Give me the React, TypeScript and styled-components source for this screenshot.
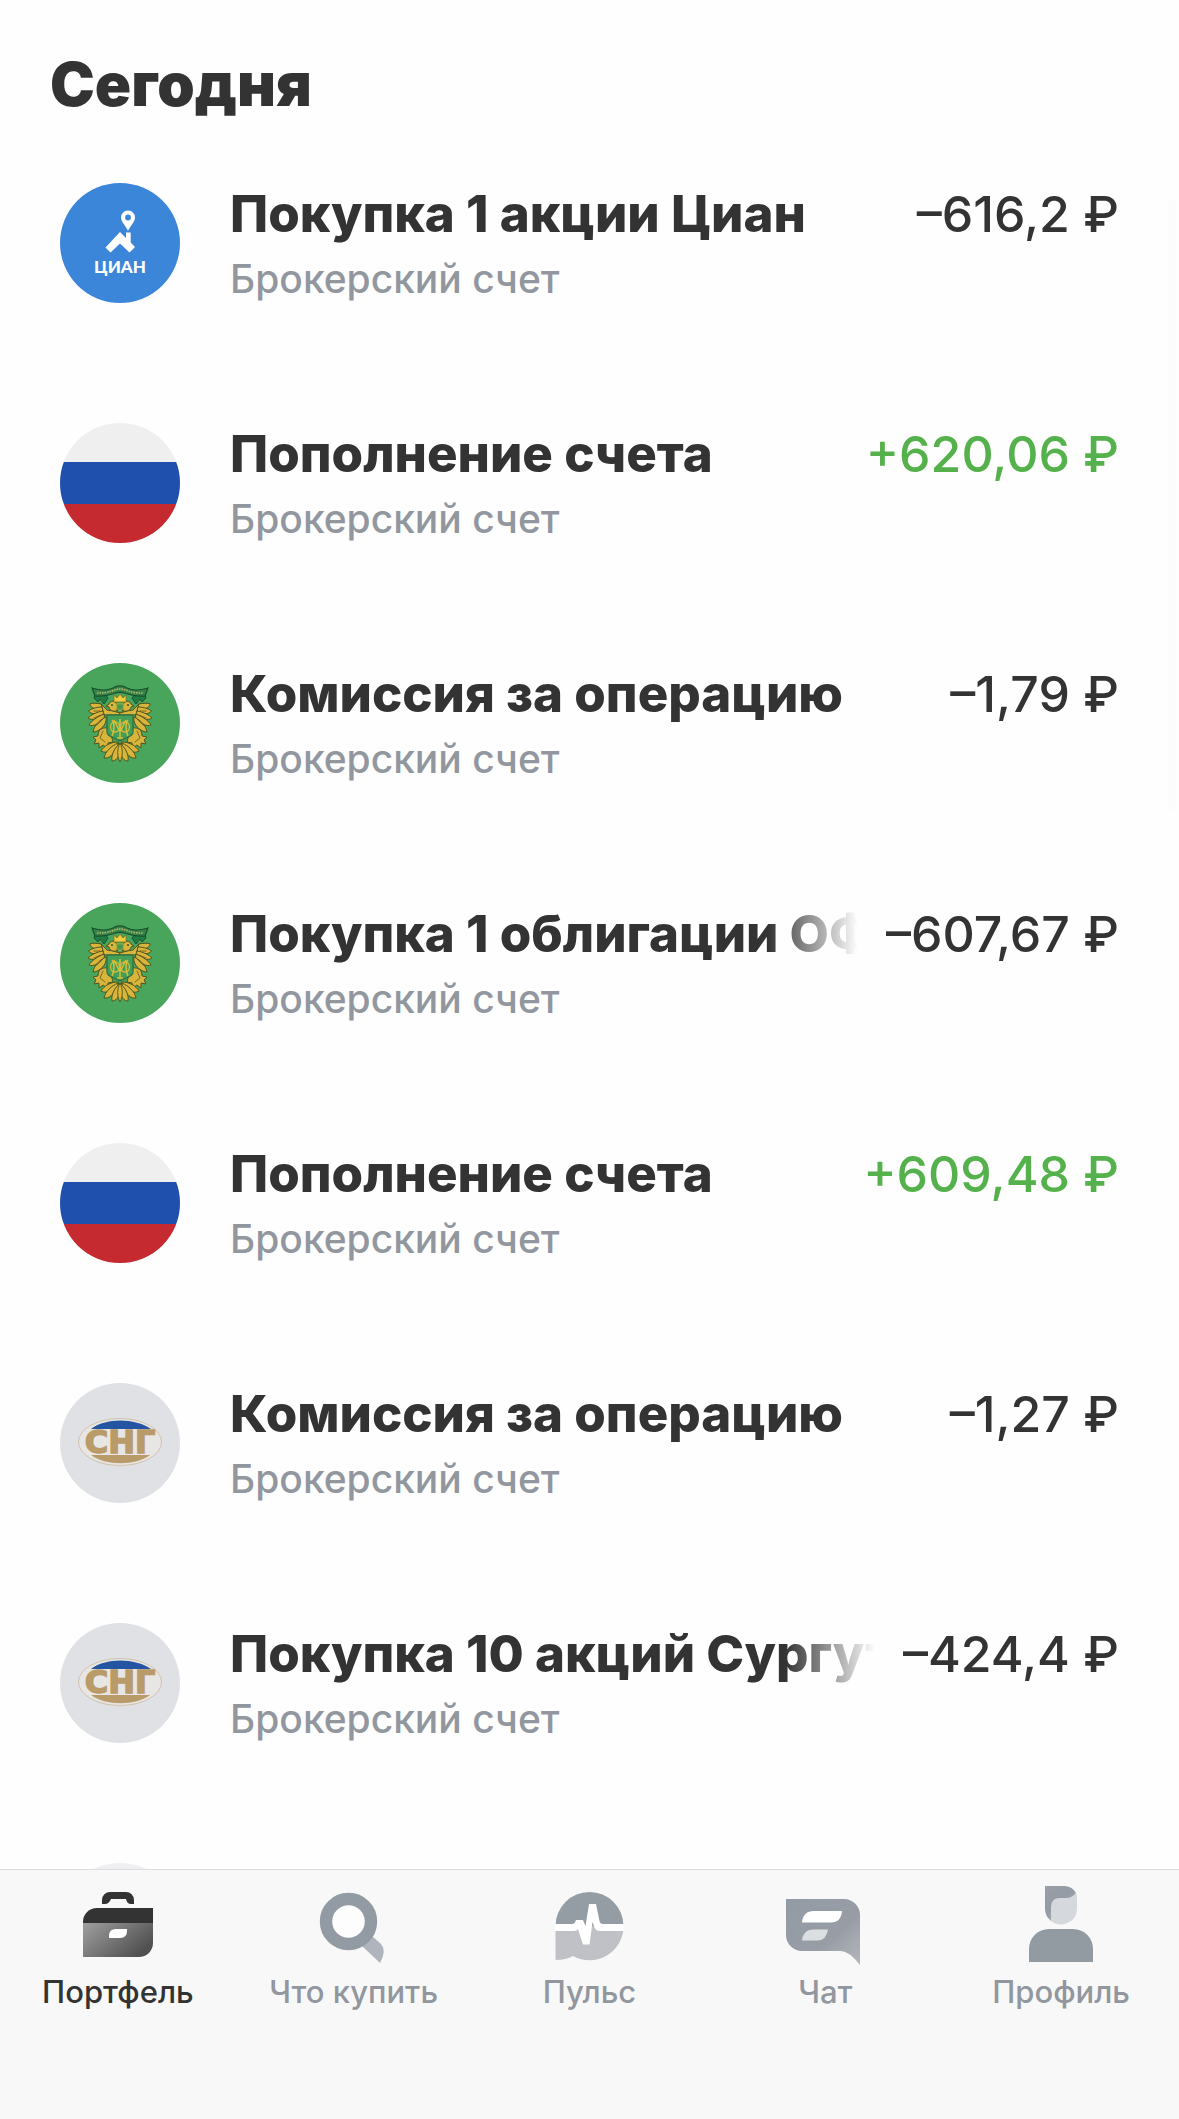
import React from "react";
import styled, { createGlobalStyle } from "styled-components";

const GlobalStyle = createGlobalStyle`
  *, *::before, *::after { box-sizing: border-box; }
  body {
    margin: 0;
    background: #fefefe;
    color: #333333;
    font-family: Inter, "Liberation Sans", sans-serif;
  }
`;

const Screen = styled.div`
  position: relative;
  display: flex;
  flex-direction: column;
  height: 100vh;
`;

const Feed = styled.main`
  flex: 1;
  min-height: 0;
  overflow-y: auto;
  scrollbar-width: none;
  padding: 48px 60px 0;
`;

const ScrollThumb = styled.div`
  position: absolute;
  top: 200px;
  right: 3px;
  width: 8px;
  height: 610px;
  border-radius: 4px;
  background: #fcfcfc;
`;

const DayTitle = styled.h1`
  margin: 0 -10px 63px;
  font-size: 60px;
  line-height: 72px;
  font-weight: 900;
`;

const Operations = styled.ul`
  display: flex;
  flex-direction: column;
  gap: 120px;
  margin: 0;
  padding: 0;
  list-style: none;
`;

const Row = styled.li`
  display: flex;
  gap: 50px;
`;

const Avatar = styled.svg`
  flex: none;
  display: block;
  width: 120px;
  height: 120px;
  border-radius: 50%;
`;

const Details = styled.div`
  flex: 1;
  min-width: 0;
  display: flex;
  flex-direction: column;
  gap: 11px;
`;

const Headline = styled.div`
  display: flex;
  justify-content: space-between;
  gap: 28px;
  line-height: 62px;
`;

const Name = styled.h2<{ $fade?: boolean }>`
  margin: 0;
  min-width: 0;
  overflow: hidden;
  white-space: nowrap;
  font-size: 51px;
  font-weight: 800;
  mask-image: ${(p) =>
    p.$fade ? "linear-gradient(to right, #000 calc(100% - 90px), transparent)" : "none"};
`;

const Amount = styled.span<{ $income?: boolean }>`
  flex: none;
  font-size: 50px;
  font-weight: 500;
  color: ${(p) => (p.$income ? "#55b14b" : "#333333")};
`;

const Account = styled.p`
  margin: 0;
  font-size: 39px;
  line-height: 46px;
  font-weight: 500;
  color: #92979f;
`;

const TabBar = styled.nav`
  flex: none;
  display: grid;
  grid-template-columns: repeat(5, 1fr);
  padding: 12px 0 109px;
  border-top: 1px solid #dddddf;
  background: #f8f8f8;
`;

const Tab = styled.a<{ $active?: boolean }>`
  display: flex;
  flex-direction: column;
  align-items: center;
  gap: 8px;
  font-size: 31px;
  line-height: 36px;
  font-weight: 500;
  white-space: nowrap;
  text-decoration: none;
  color: ${(p) => (p.$active ? "#333333" : "#92979f")};
`;

const TabIcon = styled.svg`
  display: block;
  width: 84px;
  height: 84px;
`;

const CianLogo = () => (
  <Avatar viewBox="0 0 120 120" aria-hidden="true">
    <rect width="120" height="120" fill="#3c86da" />
    <g transform="translate(0 10)" fill="#fff">
      <path
        fillRule="evenodd"
        d="M68 38C66 33 61 29 61 24.500a7 7 0 0 1 14 0C75 29 70 33 68 38ZM68 21.600a2.900 2.900 0 1 0 0 5.800a2.900 2.900 0 0 0 0-5.800Z"
      />
      <path d="M60 39 45.500 54.500 50.500 59.500 60 50.500 69.500 59.500 75 54 70.700 49.500V39.500H66V45Z" />
      <text x="60" y="80" textAnchor="middle" fontFamily="Lato, sans-serif" fontWeight="900" fontSize="17">
        ЦИАН
      </text>
    </g>
  </Avatar>
);

const RussiaFlag = () => (
  <Avatar viewBox="0 0 120 120" aria-hidden="true">
    <rect width="120" height="120" fill="#efefef" />
    <rect y="39" width="120" height="42" fill="#2050ad" />
    <rect y="81" width="120" height="39" fill="#c52a31" />
  </Avatar>
);

const EagleHalf = () => (
  <g strokeLinecap="round" strokeLinejoin="round">
    <path d="M35 31l-1 4 4 4 2-3 4 5 4-6-3-4z" fill="#1f7d45" stroke="#17502d" strokeWidth="1" />
    <g fill="#d9b53c" stroke="#4f5420" strokeWidth="1">
      <path d="M60 52H45C38 50 36 43 40 40L47 47 53 48 60 50Z" />
      <path d="M57 48c-4 1-8-1-8-4l-3-1 3-2c1-3 5-4 7-1 2 2 1 5 1 8Z" />
      <path d="M41 41C37 40 33 40 29.500 41c2 4 6 6 12 6Z" />
      <path d="M42 44C36 44 31 46 28.500 48c3 4 9 3 14 0Z" />
      <path d="M43 48C36 49 31 52 28 55c4 3 11 1 15-3Z" />
      <path d="M44 51C37 54 31 58 29 62c4 2 12-2 15-6Z" />
      <path d="M46 54C39 57 34 63 33 69c5 0 12-5 13-11Z" />
      <path d="M47 65c-5-1-9 2-9 8l-5 1 3 3-2 4 5-1 0 5 4-3 4 3 1-5 5-1c-1-5-3-9-6-14Z" />
      <path d="M58 79C50 79 44 83 41 88c5 3 11 0 15-4Z" />
      <path d="M58 80C51 83 45 89 44 95c5 1 10-4 13-10Z" />
      <path d="M59 81C54 86 51 92 52 98c4 0 7-4 8-9Z" />
    </g>
    <circle cx="52" cy="42" r="1" fill="#35542b" />
    <path d="M43 68l-3 7 5 4M34 48h6M34 55l7-3M37 62l6-6" stroke="#705e1f" strokeWidth="0.900" fill="none" />
  </g>
);

const TreasuryEmblem = () => (
  <Avatar viewBox="0 0 120 120" aria-hidden="true">
    <rect width="120" height="120" fill="#4aa55c" />
    <EagleHalf />
    <g transform="translate(120 0) scale(-1 1)">
      <EagleHalf />
    </g>
    <path
      d="M32 25C40 27.500 47 28 53 25C58 22 62 22 67 25C73 28 80 27.500 88 25L85 33C77 34 71 32 66 30.500C62 29 58 29 54 30.500C49 32 43 34 35 33Z"
      fill="#38834a"
      stroke="#17502d"
      strokeWidth="1.200"
    />
    <path d="M37 30C50 30.500 54 26 60 26S70 30.500 83 30" fill="none" stroke="#b0b868" strokeWidth="1.600" strokeDasharray="1.500 1" />
    <path d="M54 39V32l3 3 3-4 3 4 3-3v7Z" fill="#f0cb3e" stroke="#806f25" strokeWidth="0.800" />
    <path d="M56 41h8l-1 4-3 3-3-3Z" fill="#3f9950" stroke="#c9ae3b" strokeWidth="0.800" />
    <path d="M47 52H73V69C73 74 66 74 60 78C54 74 47 74 47 69Z" fill="#43a056" stroke="#347142" strokeWidth="1.300" />
    <path d="M60 56V75M57 75h6M52 57c3 3 2 12 0 16M68 57c-3 3-2 12 0 16M54 57l6 12 6-12" fill="none" stroke="#d8bd3d" strokeWidth="1.500" />
    <ellipse cx="55" cy="64" rx="4.500" ry="5" fill="none" stroke="#d8bd3d" strokeWidth="1.300" />
    <ellipse cx="65" cy="64" rx="4.500" ry="5" fill="none" stroke="#d8bd3d" strokeWidth="1.300" />
    <path d="M60 80c-3 6-3 13 0 19 3-6 3-13 0-19Z" fill="#e1b737" stroke="#4f5420" strokeWidth="0.900" />
  </Avatar>
);

const SurgutLogo = () => (
  <Avatar viewBox="0 0 120 120" aria-hidden="true">
    <rect width="120" height="120" fill="#dfe1e5" />
    <ellipse cx="60" cy="59" rx="41.500" ry="23.500" fill="#e7e6e5" stroke="#cdb99d" strokeWidth="0.800" />
    <path d="M31 46C45 34.500 75 34.500 91 46Z" fill="#2455a3" />
    <path d="M31 72H90C76 83 45 83 31 72Z" fill="#b99b69" />
    <text
      x="60"
      y="70"
      textAnchor="middle"
      fill="#b99b69"
      stroke="#b99b69"
      strokeWidth="1.500"
      fontFamily="DejaVu Sans, sans-serif"
      fontWeight="700"
      fontSize="32"
    >
      СНГ
    </text>
  </Avatar>
);

const BlankLogo = () => (
  <Avatar viewBox="0 0 120 120" aria-hidden="true">
    <rect width="120" height="120" fill="#efeff1" />
  </Avatar>
);

const PortfolioIcon = () => (
  <TabIcon viewBox="0 0 84 84" aria-hidden="true">
    <defs>
      <linearGradient id="case" x1="0" y1="0" x2="1" y2="0.600">
        <stop offset="0" stopColor="#a0a0a0" />
        <stop offset="1" stopColor="#505050" />
      </linearGradient>
    </defs>
    <path fill="#333" d="M26 22V18a8 8 0 0 1 8-8H50a8 8 0 0 1 8 8V22H55Q51 22 50 17H35Q33 22 29 22Z" />
    <path fill="#333" d="M7 41.500V40A14 14 0 0 1 21 26H77V41.500Z" />
    <path fill="url(#case)" d="M7 41H77V61A14 14 0 0 1 63 75H7Z" />
    <path fill="#fff" d="M33 56V54Q33 47 40 47H51V49Q51 56 44 56Z" />
  </TabIcon>
);

const SearchIcon = () => (
  <TabIcon viewBox="0 0 84 84" aria-hidden="true">
    <path fill="#b0b4bc" d="M50 64 60 54 69 62Q75 69 68 81Z" />
    <circle cx="36.500" cy="39.500" r="22.500" fill="#fdfdfd" stroke="#929aa3" strokeWidth="12.400" />
  </TabIcon>
);

const PulseIcon = () => (
  <TabIcon viewBox="0 0 84 84" aria-hidden="true">
    <path fill="#949ca4" d="M8.500 44a34 34 0 0 1 68 0Z" />
    <path fill="#bfc1c6" d="M8.500 44H76.500A34 34 0 0 1 26 74Q19 78 8.500 78Z" />
    <path
      fill="#fff"
      d="M8 42H25Q28 42 29 38H36L38.500 44 42 22H49L52.500 39Q53 42 56 42H77V49H53Q48 49 47 44L45.500 40 42.500 62.500H36L31 47Q30 49 27 49H8Z"
    />
  </TabIcon>
);

const ChatIcon = () => (
  <TabIcon viewBox="0 0 84 84" aria-hidden="true">
    <defs>
      <linearGradient id="bubble" x1="0" y1="0" x2="1" y2="1">
        <stop offset="0" stopColor="#929ba5" />
        <stop offset="0.600" stopColor="#989da5" />
        <stop offset="1" stopColor="#b3b6bd" />
      </linearGradient>
    </defs>
    <path fill="url(#bubble)" d="M3 17H61A16 16 0 0 1 77 33V83Q66 69 58 69H19A16 16 0 0 1 3 53Z" />
    <path fill="#fff" d="M19 40.500Q20 29 31 29H59Q58 40.500 48 40.500Z" />
    <path fill="#dcdfe2" d="M19 58.500Q20 47.500 30 47.500H45Q43 58.500 35 58.500Z" />
  </TabIcon>
);

const ProfileIcon = () => (
  <TabIcon viewBox="0 0 84 84" aria-hidden="true">
    <defs>
      <linearGradient id="hair" x1="0" y1="0" x2="0.800" y2="1">
        <stop offset="0" stopColor="#9a9fa7" />
        <stop offset="0.500" stopColor="#949ba4" />
        <stop offset="1" stopColor="#b4b7be" />
      </linearGradient>
    </defs>
    <path fill="#d5d8dc" d="M31 12H58V27A16 16 0 0 1 31 38Z" />
    <path fill="url(#hair)" d="M26 4H46Q54 5 57 11Q53 16 47 16H41Q32 16 32 25V39Q26 34 26 27Z" />
    <path fill="#929aa2" d="M10 80V67A20 20 0 0 1 30 47H54A20 20 0 0 1 74 67V80Z" />
  </TabIcon>
);

type Operation = {
  Logo: React.ComponentType;
  name: string;
  amount: string;
  income?: boolean;
  fade?: boolean;
};

const operations: Operation[] = [
  { Logo: CianLogo, name: "Покупка 1 акции Циан", amount: "–616,2 ₽" },
  { Logo: RussiaFlag, name: "Пополнение счета", amount: "+620,06 ₽", income: true },
  { Logo: TreasuryEmblem, name: "Комиссия за операцию", amount: "–1,79 ₽" },
  { Logo: TreasuryEmblem, name: "Покупка 1 облигации ОФ", amount: "–607,67 ₽", fade: true },
  { Logo: RussiaFlag, name: "Пополнение счета", amount: "+609,48 ₽", income: true },
  { Logo: SurgutLogo, name: "Комиссия за операцию", amount: "–1,27 ₽" },
  { Logo: SurgutLogo, name: "Покупка 10 акций Сургут", amount: "–424,4 ₽", fade: true },
];

const tabs = [
  { Icon: PortfolioIcon, label: "Портфель" },
  { Icon: SearchIcon, label: "Что купить" },
  { Icon: PulseIcon, label: "Пульс" },
  { Icon: ChatIcon, label: "Чат" },
  { Icon: ProfileIcon, label: "Профиль" },
];

export default function App() {
  return (
    <>
      <GlobalStyle />
      <Screen>
        <Feed>
          <DayTitle>Сегодня</DayTitle>
          <Operations>
            {operations.map(({ Logo, name, amount, income, fade }, i) => (
              <Row key={i}>
                <Logo />
                <Details>
                  <Headline>
                    <Name $fade={fade}>{name}</Name>
                    <Amount $income={income}>{amount}</Amount>
                  </Headline>
                  <Account>Брокерский счет</Account>
                </Details>
              </Row>
            ))}
            <Row>
              <BlankLogo />
            </Row>
          </Operations>
        </Feed>
        <ScrollThumb />
        <TabBar>
          {tabs.map(({ Icon, label }, i) => (
            <Tab key={label} href="#" $active={i === 0} aria-current={i === 0 ? "page" : undefined}>
              <Icon />
              {label}
            </Tab>
          ))}
        </TabBar>
      </Screen>
    </>
  );
}
